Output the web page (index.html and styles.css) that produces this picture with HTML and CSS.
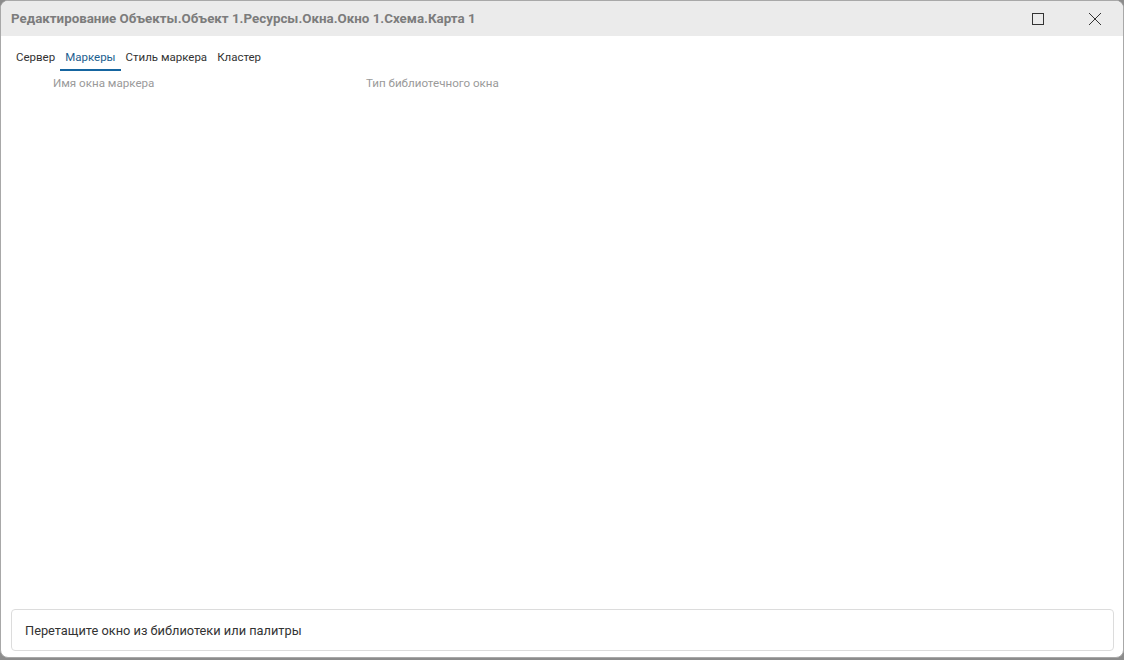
FILE: index.html
```html
<!DOCTYPE html>
<html lang="ru">
<head>
  <meta charset="UTF-8" />
  <title>Редактирование</title>
  <link rel="stylesheet" href="styles.css">
</head>
<body>

  <div class="window">
    <div class="titlebar">
      <span class="title">Редактирование Объекты.Объект 1.Ресурсы.Окна.Окно 1.Схема.Карта 1</span>
      <div class="win-buttons">
        <button class="win-btn" title="Развернуть">
          <svg width="14" height="14" viewBox="0 0 14 14"><rect x="1.5" y="1.5" width="11" height="11" fill="none" stroke="#333" stroke-width="1"/></svg>
        </button>
        <button class="win-btn" title="Закрыть">
          <svg width="14" height="14" viewBox="0 0 14 14"><path d="M1 1 L13 13 M13 1 L1 13" stroke="#333" stroke-width="1"/></svg>
        </button>
      </div>
    </div>

    <div class="content">
      <div class="tabs">
        <span class="tab">Сервер</span>
        <span class="tab active">Маркеры</span>
        <span class="tab">Стиль маркера</span>
        <span class="tab">Кластер</span>
      </div>

      <div class="columns">
        <span class="col col-name">Имя окна маркера</span>
        <span class="col col-type">Тип библиотечного окна</span>
      </div>

      <div class="list"></div>

      <div class="dropzone">Перетащите окно из библиотеки или палитры</div>
    </div>
  </div>

</body>
</html>
```

FILE: styles.css
```css
html, body {
  margin: 0;
  padding: 0;
  height: 100%;
}
body {
  font-family: Roboto, 'Noto Sans', sans-serif;
  background: #8c8c8c;
  color: #333;
}
.window {
  box-sizing: border-box;
  height: 658px;
  background: #fff;
  border: 1px solid #a8a8a8;
  border-radius: 8px;
  overflow: hidden;
  display: flex;
  flex-direction: column;
}
.titlebar {
  height: 35px;
  flex: none;
  background: #ebebeb;
  display: flex;
  align-items: center;
  padding-left: 10px;
}
.title {
  font-size: 13.35px;
  font-weight: 700;
  color: #7c7c7c;
  flex: 1;
}
.win-buttons {
  display: flex;
  height: 100%;
}
.win-btn {
  width: 57px;
  height: 100%;
  border: none;
  background: transparent;
  padding: 0;
  display: flex;
  align-items: center;
  justify-content: center;
}
.content {
  flex: 1;
  display: flex;
  flex-direction: column;
  padding: 0 9px 6px 10px;
}
.tabs {
  display: flex;
  padding-top: 11px;
}
.tab {
  font-size: 11.5px;
  color: #333;
  padding: 3px 5px 5px;
  border-bottom: 2px solid transparent;
}
.tab.active {
  color: #1b5e8f;
  border-bottom-color: #1565a0;
}
.columns {
  display: flex;
  font-size: 11.6px;
  color: #9a9a9a;
  padding-top: 5px;
}
.col-name {
  box-sizing: border-box;
  padding-left: 42px;
  width: 355px;
}
.list {
  flex: 1;
}
.dropzone {
  height: 40px;
  border: 1px solid #dcdcdc;
  border-radius: 4px;
  display: flex;
  align-items: center;
  padding-left: 13px;
  font-size: 12.8px;
  color: #333;
}
```
